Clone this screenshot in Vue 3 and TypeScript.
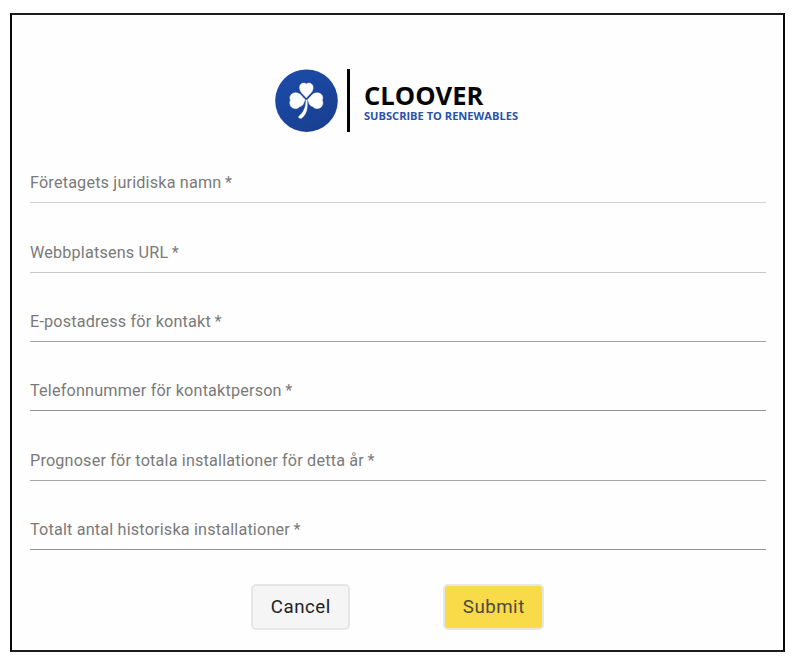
<script setup lang="ts">
import { ref } from 'vue'

interface Field {
  id: string
  label: string
  tone: 'faint' | 'soft' | 'mid' | 'strong'
}

const fields = ref<Field[]>([
  { id: 'company', label: 'Företagets juridiska namn', tone: 'faint' },
  { id: 'website', label: 'Webbplatsens URL', tone: 'soft' },
  { id: 'email', label: 'E-postadress för kontakt', tone: 'mid' },
  { id: 'phone', label: 'Telefonnummer för kontaktperson', tone: 'strong' },
  { id: 'forecast', label: 'Prognoser för totala installationer för detta år', tone: 'mid' },
  { id: 'history', label: 'Totalt antal historiska installationer', tone: 'strong' },
])
</script>

<template>
  <main class="page">
    <form class="frame" @submit.prevent>
      <header class="brand">
        <svg class="mark" viewBox="0 0 63 63" aria-hidden="true">
          <defs>
            <linearGradient id="disc" x1="0" y1="0" x2="0.6" y2="1">
              <stop offset="0" stop-color="#1b4dab" />
              <stop offset="1" stop-color="#193f91" />
            </linearGradient>
          </defs>
          <circle cx="31.5" cy="31.7" r="31.3" fill="url(#disc)" />
          <g fill="#fff" stroke="#fff" stroke-width="0.5" stroke-linejoin="round">
            <path d="M31.3 29C29.8 26.6 24.6 23.6 24.6 18.6C24.6 14.6 28.4 13 31.3 14.9C34.2 13 38.1 14.6 38.1 18.6C38.1 23.6 32.8 26.6 31.3 29Z" />
            <path d="M30.2 30.6C27.6 29 25.6 23.4 20.2 23.8C16.3 24.1 13.7 27.6 15.5 31.2C13.7 34.3 15.6 39 19.4 39.4C22 39.8 24 38.8 24.9 37.4C28.5 37.4 28.8 33 30.2 30.6Z" />
            <path d="M32.5 30.6C35.1 29 37.1 23.4 42.5 23.8C46.4 24.1 49 27.6 47.2 31.2C49 34.3 47.1 39 43.3 39.4C40.7 39.8 38.7 38.8 37.8 37.4C34.2 37.4 33.9 33 32.5 30.6Z" />
            <path d="M31 31H32C32.8 38 32 45 26.7 49.1C25.6 49.9 22.6 48.6 23.7 47.4C28.4 43.6 31.1 38.5 31 31Z" />
          </g>
        </svg>
        <span class="divider"></span>
        <div class="wordmark">
          <span class="name">CLOOVER</span>
          <span class="tagline">SUBSCRIBE TO RENEWABLES</span>
        </div>
      </header>

      <div class="fields">
        <div v-for="field in fields" :key="field.id" class="field" :class="field.tone">
          <label>{{ field.label }}<span class="star">*</span></label>
        </div>
      </div>

      <div class="actions">
        <button type="button" class="cancel">Cancel</button>
        <button type="submit" class="submit">Submit</button>
      </div>
    </form>
  </main>
</template>

<style>
body {
  margin: 0;
  background: #fff;
}
</style>

<style scoped>
.page {
  box-sizing: border-box;
  width: 798px;
  height: 668px;
  padding: 13px 13px 16px 10px;
  font-family: Roboto, "Liberation Sans", sans-serif;
}

.frame {
  box-sizing: border-box;
  height: 639px;
  padding: 54px 18px 0;
  border: 2px solid #080808;
  border-top-color: #1c1c1c;
  border-bottom-color: #1c1c1c;
  background: #fefefe;
}

.brand {
  display: flex;
  height: 64px;
  padding-left: 245px;
}

.mark {
  flex: none;
  width: 63px;
  height: 63px;
}

.divider {
  width: 3px;
  height: 63px;
  margin-left: 9px;
  background: #000;
}

.wordmark {
  display: flex;
  flex-direction: column;
  margin-left: 14px;
  padding-top: 12px;
  font-family: "Open Sans", "Noto Sans", sans-serif;
  font-weight: 700;
  white-space: nowrap;
}

.name {
  font-size: 25.6px;
  line-height: 29px;
  color: #050505;
}

.tagline {
  font-size: 11.1px;
  line-height: 12px;
  color: #2853a9;
}

.fields {
  width: 735.5px;
  padding-top: 1.1px;
}

.field {
  box-sizing: border-box;
  display: flex;
  align-items: flex-end;
  height: 69.3px;
  padding-bottom: 9px;
  border-bottom: 1px solid #949494;
  color: #7a7a7a;
  font-size: 16.2px;
  line-height: 20px;
  letter-spacing: 0.18px;
  white-space: nowrap;
}

.faint {
  border-bottom-color: #d2d2d2;
}

.soft {
  border-bottom-color: #c8c8c8;
}

.mid {
  border-bottom-color: #a5a5a5;
}

.star {
  margin-left: 3.5px;
}

.actions {
  display: flex;
  gap: 93px;
  padding: 34px 0 0 221.3px;
}

button {
  box-sizing: border-box;
  height: 46px;
  padding: 1px 0 0;
  border: 2px solid #e6e6e6;
  border-radius: 5px;
  font-family: inherit;
  font-size: 18.7px;
  letter-spacing: 0.5px;
}

.cancel {
  width: 99px;
  background: #f5f5f5;
  color: #222;
}

.submit {
  width: 101px;
  border-color: #e6e6e4;
  background: #f9da49;
  color: #4b4a42;
}
</style>
